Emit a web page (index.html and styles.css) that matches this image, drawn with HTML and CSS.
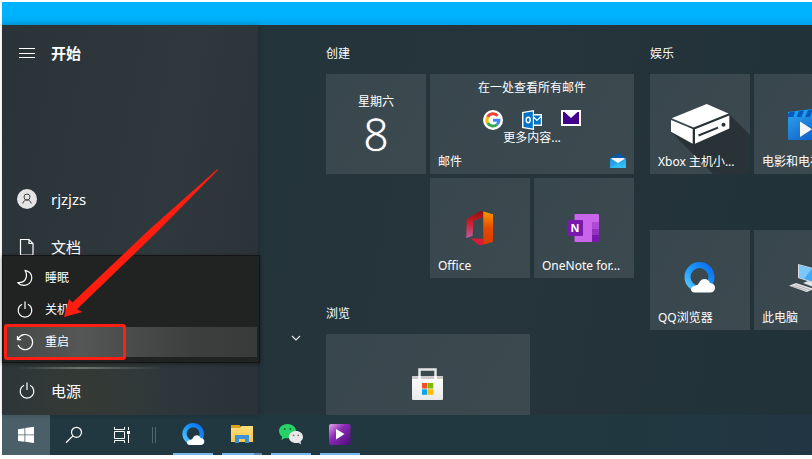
FILE: index.html
```html
<!DOCTYPE html>
<html lang="zh-CN">
<head>
<meta charset="utf-8">
<meta name="viewport" content="width=device-width, initial-scale=1">
<title>开始</title>
<link rel="stylesheet" href="styles.css">
</head>
<body>
<svg class="defs" aria-hidden="true">
  <defs>
    <linearGradient id="qqRing" x1="0" y1="1" x2="1" y2="0"><stop offset="0" stop-color="#5cc8ff"/><stop offset=".45" stop-color="#1e9dfb"/><stop offset="1" stop-color="#0a6cf0"/></linearGradient>
    <linearGradient id="cloud" x1="0" y1="0" x2="1" y2="1"><stop offset="0" stop-color="#cfe9ff"/><stop offset=".4" stop-color="#fff"/></linearGradient>
    <linearGradient id="officeLeft" x1="0" y1="0" x2="0" y2="1"><stop offset="0" stop-color="#8e0d0d"/><stop offset=".45" stop-color="#d0202c"/><stop offset="1" stop-color="#b95fa8"/></linearGradient>
    <linearGradient id="officeRight" x1="0" y1="0" x2="0" y2="1"><stop offset="0" stop-color="#fb9a00"/><stop offset=".5" stop-color="#e54a00"/><stop offset="1" stop-color="#d83b01"/></linearGradient>
    <linearGradient id="film" x1="0" y1="0" x2="1" y2="1"><stop offset="0" stop-color="#2a9bea"/><stop offset="1" stop-color="#0b57c2"/></linearGradient>
    <linearGradient id="bag" x1="0" y1="0" x2="0" y2="1"><stop offset="0" stop-color="#fff"/><stop offset="1" stop-color="#e9e9ea"/></linearGradient>
    <linearGradient id="purple" x1="0" y1="0" x2="1" y2="1"><stop offset="0" stop-color="#e2a5ea"/><stop offset=".4" stop-color="#8b2bb5"/><stop offset="1" stop-color="#4b0a7a"/></linearGradient>
    <linearGradient id="folder" x1="0" y1="0" x2="0" y2="1"><stop offset="0" stop-color="#ffdf7c"/><stop offset="1" stop-color="#fbc748"/></linearGradient>
    <linearGradient id="envelope" x1="0" y1="0" x2="1" y2="1"><stop offset="0" stop-color="#1d8fe0"/><stop offset="1" stop-color="#35c4f5"/></linearGradient>
    <symbol id="qq" viewBox="0 0 32 32">
      <circle cx="15.500" cy="15" r="12" fill="none" stroke="url(#qqRing)" stroke-width="6"/>
      <path d="M11 30.500c-3 0-4-1.500-4-3 0-2 1.500-3 3.500-3.500 2-.5 3.500-1 4.500-3 1-2.500 3-4 5.500-4s4.500 1.500 5.500 4c3 .2 5 2 5 4.700 0 3-2 4.800-5 4.800z" fill="url(#cloud)"/>
    </symbol>
  </defs>
</svg>

<div class="desktop"></div>

<main class="start">
  <nav class="sidebar" aria-label="开始">
    <button class="side-row side-head" type="button">
      <svg class="icon" viewBox="0 0 20 20"><path d="M2 5.500h16M2 10.500h16M2 14.500h16" stroke="#fff" stroke-width="1"/></svg>
      <span>开始</span>
    </button>
    <button class="side-row side-user" type="button">
      <svg class="icon" viewBox="0 0 20 20"><circle cx="10" cy="10" r="10" fill="#e4e4e4"/><circle cx="10" cy="8" r="3" fill="none" stroke="#444"/><path d="M5.800 14.500c.4-2.300 2-3.500 4.200-3.500s3.800 1.200 4.200 3.500" fill="none" stroke="#444"/></svg>
      <span>rjzjzs</span>
    </button>
    <button class="side-row side-docs" type="button">
      <svg class="icon" viewBox="0 0 20 20"><path d="M3.500 2.500h8.500l4 4v11.500h-12.500zM12 2.500v4h4" fill="none" stroke="#fff" stroke-width="1.200"/></svg>
      <span>文档</span>
    </button>
    <button class="side-row side-power" type="button">
      <svg class="icon" viewBox="0 0 20 20"><path d="M7 4.200a6.800 6.800 0 1 0 6 0M10 1.500v7.500" fill="none" stroke="#fff" stroke-width="1.200"/></svg>
      <span>电源</span>
    </button>

    <div class="power-menu" role="menu">
      <button class="menu-item" type="button" role="menuitem">
        <svg class="icon" viewBox="0 0 20 20"><path d="M10 2.300c4.500 1 7 4 6.800 8-.3 4.200-3.500 7-7.500 7-2.600 0-5-.9-6.600-2.700 3.500.3 6-.7 7.500-3 1.700-2.600 1.600-6-.2-9.300z" fill="none" stroke="#fff" stroke-width="1.200" stroke-linejoin="round"/></svg>
        <span>睡眠</span>
      </button>
      <button class="menu-item" type="button" role="menuitem">
        <svg class="icon" viewBox="0 0 20 20"><path d="M7 4.200a6.800 6.800 0 1 0 6 0M10 1.500v7.500" fill="none" stroke="#fff" stroke-width="1.200"/></svg>
        <span>关机</span>
      </button>
      <button class="menu-item is-active" type="button" role="menuitem">
        <svg class="icon" viewBox="0 0 20 20"><path d="M3 13a7.600 7.600 0 1 0 .3-6.400L2.700 7.500M2.500 4v3.700h3.700" fill="none" stroke="#fff" stroke-width="1.200"/></svg>
        <span>重启</span>
      </button>
      <div class="highlight"></div>
    </div>
    <svg class="arrow" viewBox="0 0 156 150" aria-hidden="true"><path d="M155.500 1L156 2L95 64L15 141.300L20.500 144L2 149L7 131L10.500 134.500L88 61z" fill="#ff1d10"/></svg>
  </nav>

  <div class="rail">
    <button class="expand" type="button" aria-label="展开"><svg viewBox="0 0 10 6"><path d="M1 1l4 4 4-4" fill="none" stroke="#e4e8ea" stroke-width="1.200"/></svg></button>
  </div>

  <div class="groups">
    <div class="group-column">
      <section class="group">
        <h2>创建</h2>
        <div class="tiles">
          <a class="tile calendar" href="#"><span>星期六</span><span class="day">8</span></a>
          <a class="tile wide mail" href="#">
            <span class="mail-body">
              <span>在一处查看所有邮件</span>
              <span class="mail-icons">
                <svg viewBox="0 0 20 20"><circle cx="10" cy="10" r="10" fill="#fff"/><g fill="none" stroke-width="3"><path d="M14.600 5.800A6 6 0 0 0 4.700 7" stroke="#ea4335"/><path d="M4.700 7a6 6 0 0 0 0 6" stroke="#fbbc05"/><path d="M4.700 13a6 6 0 0 0 9.300 1.500" stroke="#34a853"/><path d="M10 10.200h6a6 6 0 0 1-2 4.300" stroke="#4285f4"/></g></svg>
                <svg viewBox="0 0 20 20"><path d="M0 2L12 0v4h8v12h-8v4L0 18z" fill="#fff"/><path d="M1.500 3L10.800 1.500v17L1.500 17zM12 5.500h6.800v9H12z" fill="#0072c6"/><path d="M12 7.500l3 3 4-4" fill="none" stroke="#fff" stroke-width="1.200"/><ellipse cx="6.200" cy="10" rx="2" ry="2.700" fill="none" stroke="#fff" stroke-width="1.400"/></svg>
                <svg viewBox="0 0 20 20"><path d="M0 0h20v16H0z" fill="#fff"/><path d="M2 2h16v12H2z" fill="#40008c"/><path d="M3.500 2h13L10 8z" fill="#fff"/></svg>
              </span>
              <span>更多内容...</span>
            </span>
            <span class="label">邮件</span>
            <svg class="mail-logo" viewBox="0 0 16 16"><path d="M0 5L8 0l8 5v3H0z" fill="#0b58a6"/><path d="M1.500 5h13v5h-13z" fill="#f4f7fa"/><path d="M0 5l8 5 8-5v10H0z" fill="url(#envelope)"/><path d="M0 15l8-5 8 5z" fill="#38c5f8" opacity=".6"/></svg>
          </a>
          <a class="tile col-2" href="#">
            <svg class="art" viewBox="0 0 100 100"><path d="M50.700 33L36.700 40.700L36.300 60.300L42.700 57.700L43.300 42.700L53.300 39.300V33.700z" fill="url(#officeLeft)"/><path d="M40.700 60.300L53.500 60.700V66.500L50.700 67.300L48.300 66.700z" fill="#d91c38"/><path d="M53.300 33.400L63 36.300V63.700L53.300 66.700z" fill="url(#officeRight)"/></svg>
            <span class="label">Office</span>
          </a>
          <a class="tile" href="#">
            <svg class="art" viewBox="0 0 100 100"><rect x="40.500" y="36" width="24.500" height="28" rx="1" fill="#ca64ea"/><path d="M58 44h7v7h-7z" fill="#ae4bd5"/><path d="M58 51h7v6h-7z" fill="#9332bf"/><path d="M58 57h7v6.500l-.5.500H58z" fill="#7719aa"/><rect x="33" y="42" width="16" height="16" rx="1" fill="#7719aa"/><text class="note-n" x="41" y="54" text-anchor="middle">N</text></svg>
            <span class="label">OneNote for...</span>
          </a>
        </div>
      </section>
      <section class="group">
        <h2>浏览</h2>
        <div class="tiles">
          <a class="tile wide" href="#" aria-label="Microsoft Store">
            <svg class="art" viewBox="0 0 204 100"><path d="M93.500 45V35.500h16V45" fill="none" stroke="#e6e6e6" stroke-width="2.500"/><rect x="86" y="42" width="31" height="24" rx="1" fill="url(#bag)"/><path d="M86 42h31v3H86z" fill="#cfcacc"/><path d="M92.300 42h2.500v3h-2.500zM108.300 42h2.500v3h-2.500z" fill="#fff"/><path d="M96 49h5.300v5.500H96z" fill="#f25022"/><path d="M102 49h5.300v5.500H102z" fill="#7fba00"/><path d="M96 55.300h5.300v5.500H96z" fill="#00a4ef"/><path d="M102 55.300h5.300v5.500H102z" fill="#ffb900"/></svg>
          </a>
        </div>
      </section>
    </div>
    <div class="group-column">
      <section class="group">
        <h2>娱乐</h2>
        <div class="tiles">
          <a class="tile" href="#">
            <svg class="art" viewBox="0 0 100 100"><path d="M79 40L100 61V100H63L21 58z" fill="#293236"/><path d="M56.700 30L78.500 39.500L43.500 53.500L21.700 44.300z" fill="#fff"/><path d="M21 46L42.700 55V69.700L21 57.700z" fill="#fff"/><path d="M45 55.300L79.300 41.500V54.500L45 69.700z" fill="#fff"/><path d="M48.500 61.500L68 53.600" stroke="#293236" stroke-width="2"/><circle cx="73.500" cy="50.700" r="2" fill="#293236"/></svg>
            <span class="label">Xbox 主机小...</span>
          </a>
          <a class="tile" href="#">
            <svg class="art" viewBox="0 0 100 100"><path d="M34 38L62 34.500V44H34z" fill="#16a0e8"/><path d="M36 38l5-.6-3 10h-4V40zM45 37l5-.6-3 8h-5zM54 36l5-.7-3 8h-5z" fill="#0b57c2"/><rect x="34" y="43" width="34" height="23" rx="1" fill="url(#film)"/><path d="M46 47.500V63L58 55.200z" fill="#f5f5f5"/></svg>
            <span class="label">电影和电视</span>
          </a>
          <a class="tile lower" href="#">
            <svg class="art" viewBox="0 0 100 100"><use href="#qq" x="34" y="32" width="32" height="32"/></svg>
            <span class="label">QQ浏览器</span>
          </a>
          <a class="tile lower" href="#">
            <svg class="art" viewBox="0 0 100 100"><path d="M44 34L66 40V55L44 48z" fill="#d7dde0"/><path d="M45 35.200L66 41V54L45 47.300z" fill="#3fa9f5"/><path d="M45 35.200L58 38.700L50 49L45 47.300z" fill="#7cc8fb"/><path d="M49 53l5-2 8 2-3 4z" fill="#dfe3e6"/><path d="M35 55.700L42 53L60 59L52.700 62z" fill="#e3e3e6"/><path d="M38 56l15 4.500M41 54.700l15 5" stroke="#9a9da2" stroke-width=".7" fill="none"/></svg>
            <span class="label">此电脑</span>
          </a>
        </div>
      </section>
    </div>
  </div>
</main>

<footer class="taskbar">
  <button class="task is-open" type="button" aria-label="开始"><svg viewBox="0 0 20 20"><path d="M2 4.200L8.500 3.200V9.500H2zM9.300 3.100L18 1.800V9.500H9.300zM2 10.300h6.500v6.500L2 15.900zM9.300 10.300H18V18l-8.700-1.200z" fill="#fff"/></svg></button>
  <button class="task" type="button" aria-label="搜索"><svg viewBox="0 0 20 20"><circle cx="12.500" cy="7.300" r="5" fill="none" stroke="#fff" stroke-width="1.200"/><path d="M8.900 10.900L2 17.800" stroke="#fff" stroke-width="1.300"/></svg></button>
  <button class="task" type="button" aria-label="任务视图"><svg viewBox="0 0 20 20"><path d="M2.500 2v2.500h10V2M2.500 18v-2.500h10V18M2.500 6.500h10v7h-10zM16.500 2v3M16.500 9.500V18" fill="none" stroke="#fff"/><path d="M15 6h3v3h-3z" fill="#fff"/></svg></button>
  <span class="divider"></span>
  <div class="apps">
    <button class="app" type="button" aria-label="QQ浏览器"><svg viewBox="0 0 24 24"><use href="#qq" x="1" y="1" width="23" height="23"/></svg></button>
    <button class="app stacked" type="button" aria-label="文件资源管理器"><svg viewBox="0 0 24 24"><path d="M1 3h8.500l1.500 2v3H1z" fill="#e0a011"/><path d="M1 6h9l1.500-2H23v16H1z" fill="url(#folder)"/><path d="M5 13h14v8h-4v-4H9v4H5z" fill="#3d92d8"/></svg></button>
    <button class="app" type="button" aria-label="微信"><svg viewBox="0 0 24 24"><path d="M8.500 2C3.800 2 0 5 0 9c0 2.200 1.200 4.200 3 5.500L2.500 18l3.600-2c.8.200 1.600.3 2.400.3 4.700 0 8.500-3.200 8.500-7.200S13.200 2 8.500 2z" fill="#28d268"/><path d="M17 9c-4 0-7.200 2.600-7.200 6s3.200 6 7.200 6c.8 0 1.500-.1 2.200-.3l2.800 1.500-.5-2.700c1.600-1.100 2.500-2.700 2.500-4.500 0-3.400-3-6-7-6z" fill="#e9e9e9"/><circle cx="5.700" cy="7" r="1" fill="#126c35"/><circle cx="11.300" cy="7" r="1" fill="#126c35"/><circle cx="14.600" cy="13.300" r=".9" fill="#777"/><circle cx="19.300" cy="13.300" r=".9" fill="#777"/></svg></button>
    <button class="app" type="button" aria-label="播放器"><svg viewBox="0 0 24 24"><rect x="1" y="2" width="21.500" height="21" rx="2" fill="url(#purple)"/><path d="M8 7v10.500L16.500 12z" fill="#fff"/></svg></button>
  </div>
</footer>
</body>
</html>
```
FILE: styles.css
```css
* { box-sizing: border-box; }

body {
  margin: 0;
  padding: 2px 0 4px 2px;
  height: 100vh;
  display: flex;
  flex-direction: column;
  overflow: hidden;
  background: #fff;
  color: #fff;
  font: 12px/16px "Noto Sans", "Noto Sans CJK SC", sans-serif;
}

button {
  margin: 0;
  padding: 0;
  border: 0;
  background: none;
  color: inherit;
  font: inherit;
  text-align: left;
}

a { color: inherit; text-decoration: none; }
svg { display: block; }
.defs { position: absolute; width: 0; height: 0; }

.desktop {
  flex: 0 0 23px;
  background: linear-gradient(#00b3ff 60%, #00a3ea);
}

/* Start menu */
.start {
  flex: 1;
  min-height: 0;
  display: flex;
  background: linear-gradient(100deg, #22343b, #26343b 60%, #213239);
}

.sidebar {
  position: relative;
  z-index: 1;
  flex: 0 0 256px;
  display: flex;
  flex-direction: column;
  background:
    radial-gradient(circle at 80px 370px, #353a34, transparent 90px),
    linear-gradient(100deg, #2a3338, #2f383c 60%, #2a3237);
  box-shadow: 1px 0 5px rgba(0, 0, 0, .2);
}

.side-row {
  display: flex;
  align-items: center;
  gap: 14px;
  height: 48px;
  padding-left: 15px;
  font-size: 15px;
  line-height: 20px;
}

.icon { flex: none; width: 20px; height: 20px; }
.side-head { height: 56px; font-weight: 700; }
.side-user { margin-top: auto; }
.side-docs { margin-bottom: 96px; }

.side-power {
  padding-bottom: 2px;
  border-top: 2px solid transparent;
  border-image: linear-gradient(90deg, transparent 15px, #70756f 80px, transparent 160px) 1;
}

.power-menu {
  position: absolute;
  left: 0;
  bottom: 52px;
  width: 258px;
  padding: 6px 2px 4px;
  border: 1px solid #121415;
  background: #212323;
  box-shadow: 0 1px 4px rgba(0, 0, 0, .4);
}

.menu-item {
  display: flex;
  align-items: center;
  gap: 10px;
  width: 100%;
  height: 32px;
  padding-left: 10px;
}

.menu-item.is-active {
  border: solid transparent;
  border-width: 1px 0;
  background: linear-gradient(90deg, #464747, #555656 30%, #3d3e3e 75%, #393a3a) padding-box;
}

.highlight {
  position: absolute;
  left: 1px;
  bottom: 2px;
  width: 122px;
  height: 36px;
  border: 3px solid #ff2013;
  border-radius: 3px;
}

.arrow {
  position: absolute;
  left: 60px;
  top: 143px;
  width: 156px;
  height: 150px;
}

.rail {
  flex: 0 0 68px;
  display: flex;
  align-items: flex-end;
  padding: 0 0 74px 33px;
}

.expand svg { width: 10px; height: 6px; }

.groups {
  flex: 1;
  min-width: 0;
  display: flex;
  gap: 16px;
  padding-top: 21px;
  overflow: hidden;
}

.group-column {
  flex: none;
  display: flex;
  flex-direction: column;
  gap: 28px;
}

.group h2 {
  margin: 0 0 12px;
  font-size: 12px;
  line-height: 16px;
  font-weight: 400;
}

.tiles {
  display: grid;
  grid-template-columns: repeat(3, 100px);
  grid-auto-rows: 48px;
  gap: 4px;
}

.tile {
  grid-row: span 2;
  display: grid;
  background: linear-gradient(120deg, #38474d, #3c4a50);
}

.wide { grid-column: span 2; }
.col-2 { grid-column-start: 2; }
.lower { grid-row: 4 / span 2; }
.tile > .art, .tile > .label, .mail-body, .mail-logo { grid-area: 1 / 1; }
.art { width: 100%; height: 100px; }

.label {
  align-self: end;
  padding: 0 0 4px 8px;
  white-space: nowrap;
}

.note-n { font: 700 11px "Noto Sans", sans-serif; fill: #fff; }

.calendar {
  align-content: start;
  justify-items: center;
  padding-top: 20px;
}

.day {
  font: 300 44px/48px "Open Sans", sans-serif;
  text-shadow: 0 0 1px #fff;
}

.mail-body {
  display: flex;
  flex-direction: column;
  align-items: center;
  padding-top: 6px;
}

.mail-icons { display: flex; gap: 19px; margin-top: 14px; }
.mail-icons svg { width: 20px; height: 20px; }

.mail-logo {
  place-self: end;
  width: 16px;
  height: 16px;
  margin: 0 8px 5px 0;
}

/* Taskbar */
.taskbar {
  flex: 0 0 40px;
  display: flex;
  align-items: stretch;
  background: linear-gradient(90deg, #213840 70%, #213642);
}

.task {
  display: grid;
  place-items: center;
  width: 48px;
}

.task svg { width: 20px; height: 20px; }
.task.is-open { background: #4b5f68; }

.divider {
  align-self: center;
  width: 4px;
  height: 16px;
  margin: 0 17px 0 6px;
  border: solid #52636a;
  border-width: 0 1px;
}

.apps { display: flex; gap: 9px; }

.app {
  display: grid;
  place-items: center;
  width: 40px;
  border-bottom: 2px solid #76b9ed;
}

.app svg { width: 24px; height: 24px; }

.stacked { border-image: linear-gradient(90deg, #76b9ed 31px, #5e8db3 31px) 2; }
```
